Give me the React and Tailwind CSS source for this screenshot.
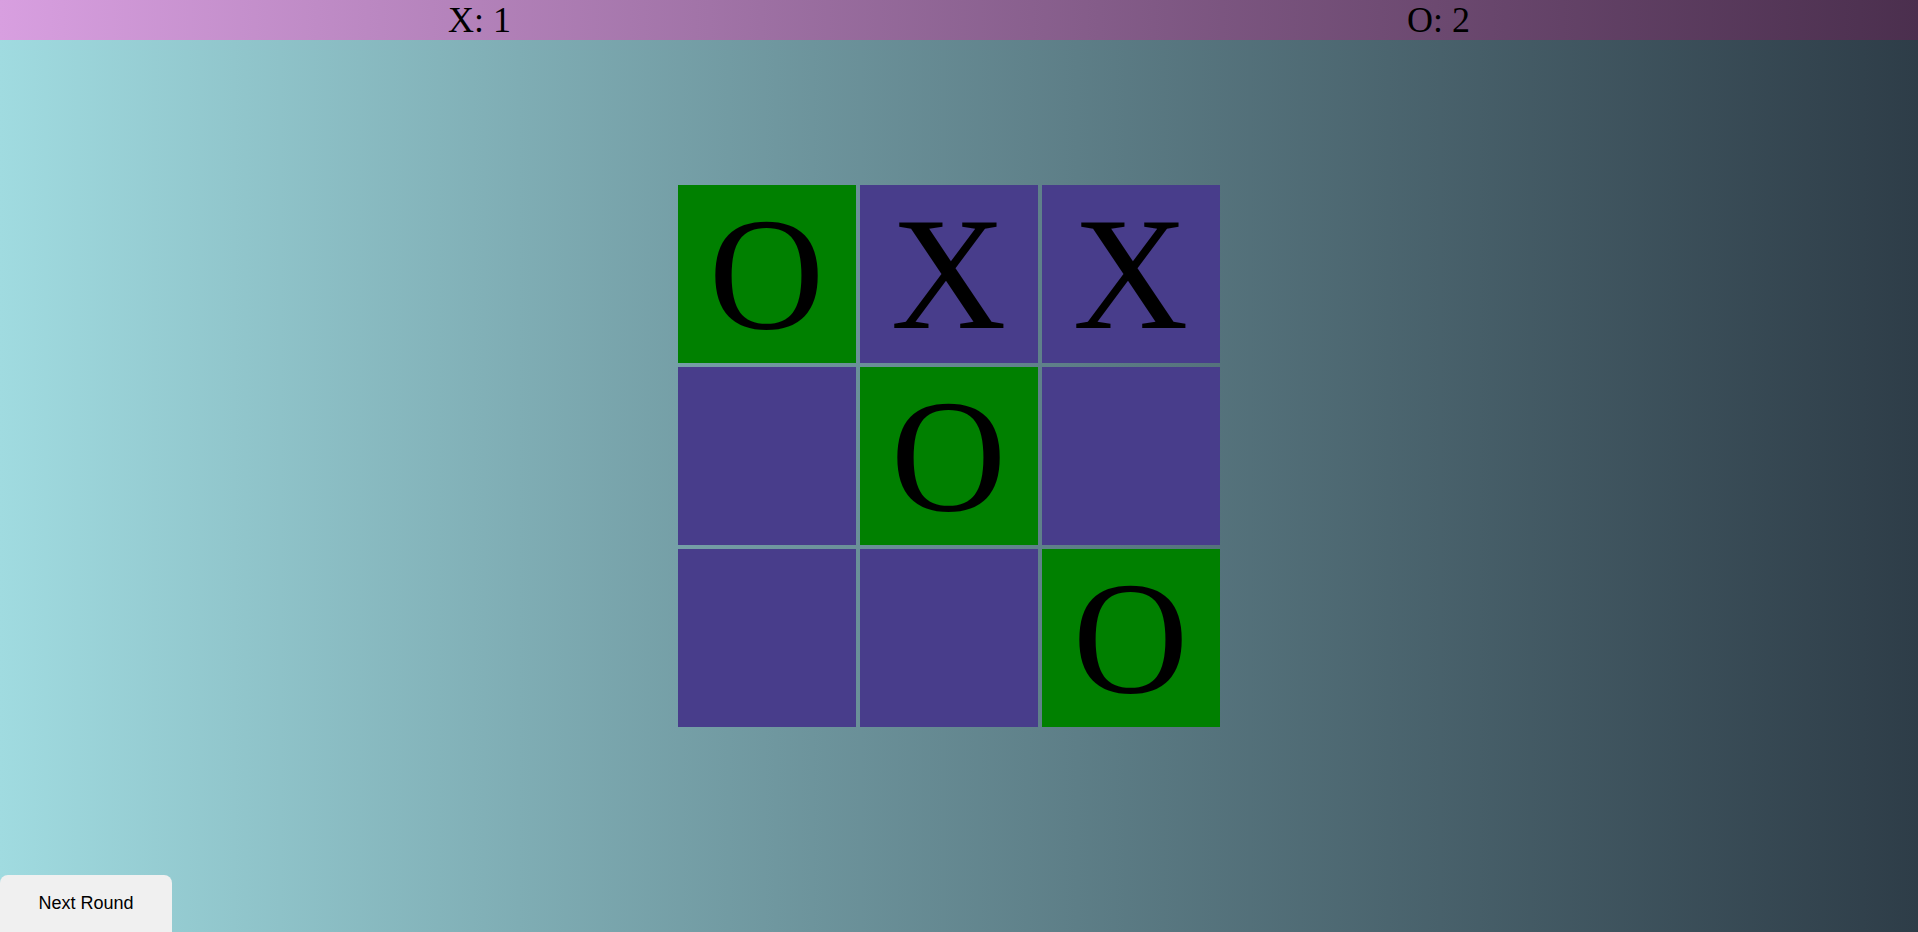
import React from "react";

const board = ["O", "X", "X", "", "O", "", "", "", "O"];

function Cell({ value }) {
  const color = value === "O" ? "bg-[#008000]" : "bg-[#483d8b]";
  return (
    <div
      className={`${color} w-[178px] h-[178px] text-center text-[160px] leading-[178px] text-black`}
      style={{ fontFamily: '"Liberation Serif", "Times New Roman", serif' }}
    >
      {value}
    </div>
  );
}

export default function App() {
  return (
    <div className="h-screen w-full overflow-hidden flex flex-col bg-gradient-to-r from-[#a0dbe0] to-[#2e3d48]">
      {/* Scoreboard */}
      <div
        className="h-10 flex justify-around items-center bg-gradient-to-r from-[#d89fe0] to-[#4b2f4e] text-[36px] leading-[40px] text-black"
        style={{ fontFamily: '"Liberation Serif", "Times New Roman", serif' }}
      >
        <span>X: 1</span>
        <span>O: 2</span>
      </div>

      {/* Board */}
      <div className="flex justify-center pr-[21px] mt-[145px]">
        <div className="grid grid-cols-3 gap-1">
          {board.map((v, i) => (
            <Cell key={i} value={v} />
          ))}
        </div>
      </div>

      {/* Next round */}
      <div className="mt-auto">
        <button
          className="w-[172px] h-[57px] bg-[#f0f0f0] rounded-t-lg text-[18px] text-black"
          style={{ fontFamily: '"Liberation Sans", Arial, sans-serif' }}
        >
          Next Round
        </button>
      </div>
    </div>
  );
}
